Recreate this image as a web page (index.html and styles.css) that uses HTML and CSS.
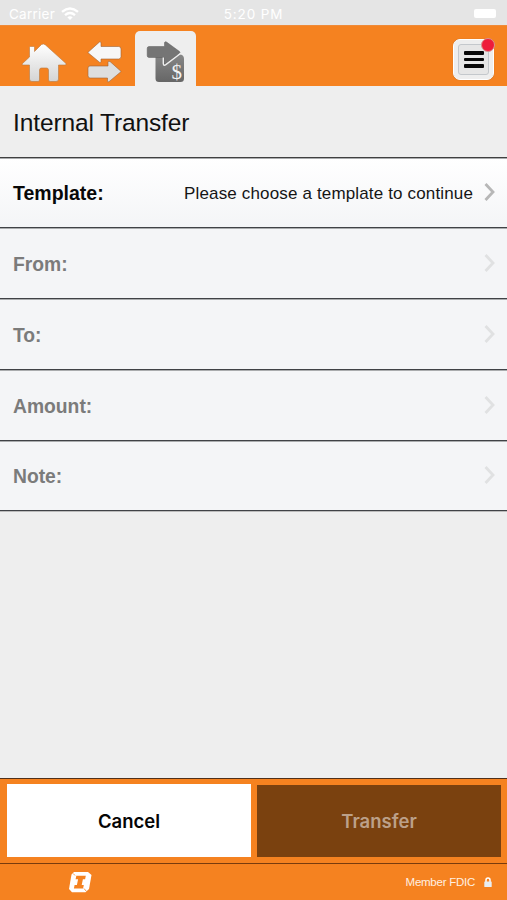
FILE: index.html
```html
<!DOCTYPE html>
<html lang="en">
<head>
<meta charset="utf-8">
<title>Internal Transfer</title>
<link rel="stylesheet" href="styles.css">
</head>
<body>
<div class="screen">
  <div class="status">
    <div class="carrier"><span>Carrier</span>
      <svg width="18" height="13" viewBox="0 0 18 13"><g fill="none" stroke="#fff" stroke-width="2.4"><path d="M1 4.800Q9-2 17 4.800"/><path d="M4 8.200Q9 4 14 8.200"/></g><path d="M6.300 10.200Q9 8.300 11.700 10.200L9 13Z" fill="#fff"/></svg>
    </div>
    <span class="clock">5:20 PM</span>
    <div class="battery"></div>
  </div>

  <header class="nav">
    <svg class="home" width="46" height="41" viewBox="0 0 46 41">
      <defs><linearGradient id="metal" x1="0" y1="0" x2="0" y2="1"><stop offset="0" stop-color="#fff"/><stop offset="1" stop-color="#d4d4d4"/></linearGradient></defs>
      <path d="M20.500 1.500Q22.500 .3 24.500 2L45 20.500Q45.500 22 44 22H37.500V36Q37.500 38.500 35 38.500H29.500Q27.500 38.500 27.500 37V27Q27.500 25 25.500 25H20.500Q18.500 25 18.500 27V37Q18.500 38.500 17 38.500H11Q8.500 38.500 8.500 36V22H2Q.500 22 1.500 20.500L8.500 14V4.500Q8.500 3.500 9.500 3.500H12.500Q13.500 3.500 13.500 4.500V8.500Z" fill="url(#metal)" stroke="#b87840" stroke-width=".6"/>
    </svg>
    <svg class="swap" width="36" height="42" viewBox="0 0 36 42">
      <path d="M.8 11.500L12.500 1Q14 .3 14 2V5.500H31.500Q34 5.500 34 8V15.500Q34 18 31.500 18H14V20.500Q14 22 12.500 21.200Z" fill="#f7f7f7" stroke="#9e6335" stroke-width=".6"/>
      <path d="M34.200 30.500L23 20.500Q21 19.600 21 21.500V25H3Q1 25 1 27V34.500Q1 37 3 37H20.500V40Q20.500 41.500 22 40.700Z" fill="#dedede" stroke="#9e6335" stroke-width=".6"/>
    </svg>
    <div class="tab">
      <svg width="40" height="43" viewBox="0 0 40 43">
        <defs><linearGradient id="steel" x1="0" y1="0" x2="0" y2="1"><stop offset="0" stop-color="#878787"/><stop offset="1" stop-color="#666"/></linearGradient></defs>
        <path d="M9.500 16H17L33 13.500H34.500Q38 14 38 18V37.500Q38 41 34.500 41H13Q9.500 41 9.500 37.500Z" fill="url(#steel)"/>
        <path d="M3 5.500H18.500V1.500Q19 .3 20.500 1L33.500 10.500Q34.500 11.500 33.500 12.300L20 22.500Q18 24 18 21.500V16.500H3Q1.200 16.500 1.200 14.500V7.500Q1.200 5.500 3 5.500Z" fill="#757575" stroke="#5c5c5c" stroke-width=".5"/>
        <path d="M17.300 16.500V22.500Q17.400 25 19.500 23.800L34.500 12.500" fill="none" stroke="#eee" stroke-width="1.400"/>
        <text class="dollar" x="25.500" y="38">$</text>
      </svg>
    </div>
    <div class="menu">
      <div class="menu-face"><i></i><i></i><i></i></div>
      <b class="badge"></b>
    </div>
  </header>

  <h1 class="title"><span>Internal Transfer</span></h1>

  <main class="form">
    <div class="row active"><span class="label">Template:</span><span class="value">Please choose a template to continue</span><svg class="chev" width="13" height="20" viewBox="0 0 13 20"><path d="M2.500 2L10 10L2.500 18"/></svg></div>
    <div class="row"><span class="label">From:</span><svg class="chev" width="13" height="20" viewBox="0 0 13 20"><path d="M2.500 2L10 10L2.500 18"/></svg></div>
    <div class="row"><span class="label">To:</span><svg class="chev" width="13" height="20" viewBox="0 0 13 20"><path d="M2.500 2L10 10L2.500 18"/></svg></div>
    <div class="row"><span class="label">Amount:</span><svg class="chev" width="13" height="20" viewBox="0 0 13 20"><path d="M2.500 2L10 10L2.500 18"/></svg></div>
    <div class="row"><span class="label">Note:</span><svg class="chev" width="13" height="20" viewBox="0 0 13 20"><path d="M2.500 2L10 10L2.500 18"/></svg></div>
  </main>

  <div class="actions">
    <button class="btn cancel"><span>Cancel</span></button>
    <button class="btn transfer"><span>Transfer</span></button>
  </div>

  <footer class="foot">
    <svg width="24" height="22" viewBox="0 0 24 22">
      <path d="M6 1H20L23.500 4L21 18L17.500 21.200H4L1 18L3.500 3.500Z" fill="#fff"/>
      <path d="M8.300 4.800H17.800L17.100 8.300H14.900L13.700 13.900H15.800L15.100 17.400H5.900L6.600 13.900H8.900L10.100 8.300H7.600Z" fill="#f58220"/>
      <path d="M5.200 2.500L7 4.500M16 17.500L18.500 20.500" stroke="#f58220" stroke-width=".8"/>
    </svg>
    <div class="fdic"><span>Member FDIC</span>
      <svg width="8" height="11" viewBox="0 0 8 11"><path d="M2 5V3Q2 1 4 1Q6 1 6 3V5" fill="none" stroke="#fff" stroke-width="1.500"/><rect x=".3" y="4.500" width="7.400" height="5.500" rx=".6" fill="#e8eef2"/></svg>
    </div>
  </footer>
</div>
</body>
</html>
```
FILE: styles.css
```css
* { box-sizing: border-box; }
body { margin: 0; font-family: "Liberation Sans", Arial, sans-serif; }
.screen { width: 507px; height: 900px; display: flex; flex-direction: column; background: #eee; overflow: hidden; }
svg { display: block; flex: none; }

.status { height: 25px; flex: none; background: #e5e5e5; color: #fff; display: grid; grid-template-columns: 1fr auto 1fr; align-items: center; padding: 2px 11px 0 9px; font: 13.5px/20px Inter, sans-serif; }
.carrier { display: flex; align-items: center; gap: 6px; }
.carrier span { letter-spacing: .25px; }
.clock { letter-spacing: .85px; padding-left: 2px; }
.battery { justify-self: end; width: 22px; height: 9px; border-radius: 2px; background: #fff; }

.nav { height: 61px; flex: none; background: #f58220; display: flex; align-items: flex-start; padding-right: 13px; border-top: 1px solid #ef8a38; }
.home { margin: 17px 0 0 21px; }
.swap { margin: 15px 0 0 20px; }
.tab { width: 61px; height: 55px; margin: 5px 0 0 12px; padding: 10px 0 0 11px; background: #eee; border-radius: 5px 5px 0 0; }
.dollar { font: 21px "Liberation Serif", serif; fill: #f2f2f2; }
.menu { position: relative; width: 41px; height: 41px; margin: 13px 0 0 auto; padding: 4px; background: #eee; border: 1px solid #fff; border-radius: 7px; box-shadow: 0 0 1px #a96c3a; }
.menu-face { height: 31px; border: 1px solid #c4c8cc; border-radius: 3px; background: #e6e6e6; display: flex; flex-direction: column; align-items: center; justify-content: center; gap: 3px; }
.menu-face i { width: 20px; height: 3.4px; background: #080808; border-radius: 1px; }
.badge { position: absolute; top: -2px; right: -2px; width: 14px; height: 14px; border-radius: 50%; background: #ee1c3b; border: 1px solid #d99390; }

.title { height: 72px; flex: none; margin: 0; padding: 2px 13px 0; display: flex; align-items: center; font-size: 24.5px; font-weight: 400; color: #111; border-bottom: 1px solid #404040; }
.title span { letter-spacing: -.12px; }

.form { display: grid; grid-template-rows: 70px 71px 71px 71px 70px; box-shadow: 0 1px #bbb; }
.row { display: flex; align-items: center; padding: 1px 11px 0 13px; background: #f4f5f7; border-bottom: 1px solid #404246; box-shadow: inset 0 1px #aaacae; }
.row.active { background: linear-gradient(#fff, #f4f5f7); }
.label { padding-top: 2px; font-size: 19.3px; font-weight: 700; color: #7b7b7b; }
.active .label { padding-top: 0; font-size: 19.5px; color: #080808; }
.value { margin-left: auto; padding-top: 1px; font-size: 17px; letter-spacing: .15px; color: #151515; }
.chev { margin: 0 0 2px auto; fill: none; stroke: #e0e1e2; stroke-width: 2.8; }
.active .chev { margin-left: 10px; stroke: #b7b7b7; }

.actions { height: 86px; flex: none; margin-top: auto; background: #f58220; border-top: 1px solid #50301a; border-bottom: 1px solid #783b0d; padding: 5px 6px 6px 7px; display: grid; grid-template-columns: 244px 244px; justify-content: space-between; }
.btn { border: 0; padding: 0; font: 600 18.5px Inter, sans-serif; border-radius: 0; }
.cancel { background: #fff; color: #050505; }
.transfer { background: #7a410f; color: #bca089; margin-top: 1px; }

.foot { height: 36px; flex: none; background: #f58220; color: #fff0e2; display: flex; align-items: center; justify-content: space-between; padding: 0 15px 0 68px; }
.fdic { display: flex; align-items: center; gap: 9px; font-size: 11.5px; letter-spacing: -.25px; }
```
